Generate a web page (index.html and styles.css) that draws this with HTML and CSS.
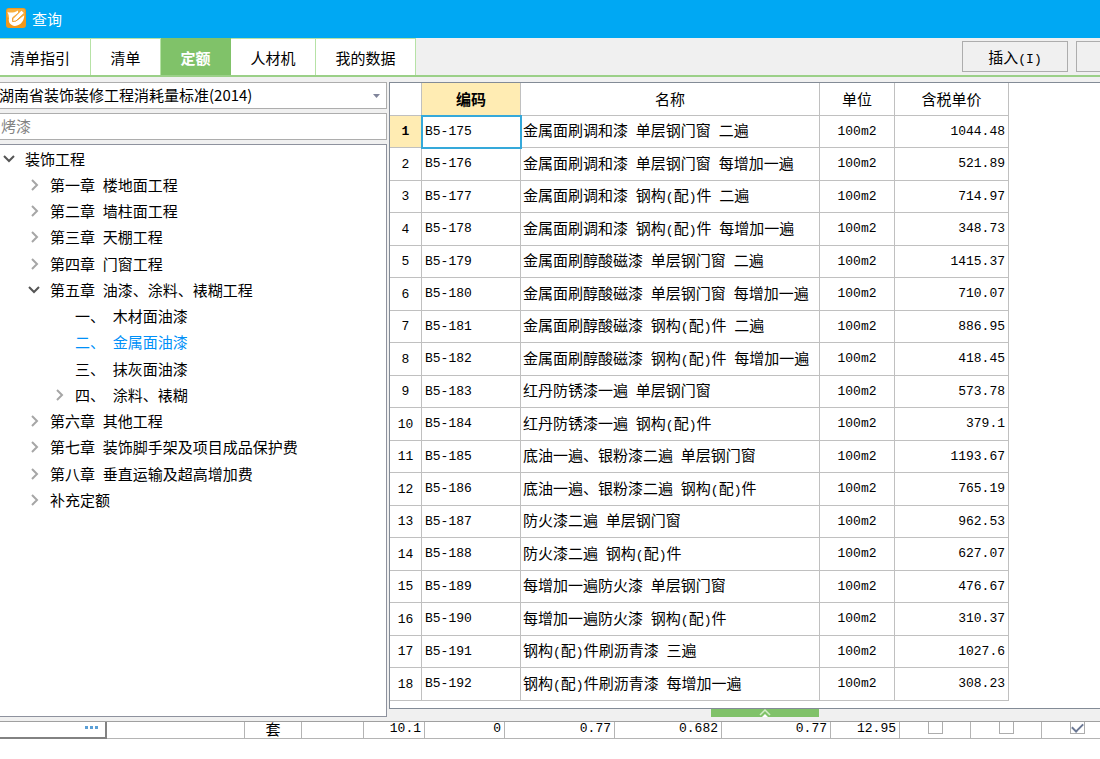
FILE: index.html
```html
<!DOCTYPE html>
<html lang="zh-CN">
<head>
<meta charset="utf-8">
<title>查询</title>
<link rel="stylesheet" href="styles.css">
</head>
<body>
<header class="titlebar">
  <svg class="logo" viewBox="0 0 20 20" aria-hidden="true">
    <rect width="20" height="20" rx="3" fill="#f3981a"/>
    <rect x="1" y="1" width="18" height="9" rx="2" fill="#f8ae3c"/>
    <path d="M1.500 4C4 5 8 5 12 2.500L12 5L8 8C6.500 9 6 10 6 11.500C7 14 10 13.500 12 12L18 7.500C18.500 12 15 17.500 9 18C4 17.500 2 14 3 10C3 8 2.500 6 1.500 4Z" fill="#fff"/>
    <path d="M7 10.500L15.500 2L18.500 5L10 13L6.500 13.500Z" fill="#fff" stroke="#f09a25" stroke-width="1"/>
  </svg>
  <h1>查询</h1>
</header>
<nav class="toolbar">
  <div class="tabs" role="tablist">
    <button class="tab tab-guide" role="tab">清单指引</button>
    <button class="tab tab-short" role="tab">清单</button>
    <button class="tab tab-short active" role="tab" aria-selected="true">定额</button>
    <button class="tab tab-mid" role="tab">人材机</button>
    <button class="tab tab-wide" role="tab">我的数据</button>
  </div>
  <div class="actions">
    <button class="action">插入<span class="mono">(I)</span></button>
    <button class="action" aria-label="替换"></button>
  </div>
</nav>
<main class="workspace">
  <aside class="sidebar">
    <div class="picker">
      <select aria-label="定额标准"><option>湖南省装饰装修工程消耗量标准(2014)</option></select>
      <svg class="caret" viewBox="0 0 7 4" aria-hidden="true"><path d="M0 0H7L3.500 4Z" fill="#80849a"/></svg>
    </div>
    <input class="search" type="text" aria-label="搜索" placeholder="烤漆">
    <ul class="tree">
      <li><button class="toggle" aria-label="折叠"><svg viewBox="0 0 12 12"><path class="open" d="M1 3L6 8L11 3"/></svg></button><span class="cn">装饰工程</span></li>
      <li class="l1"><button class="toggle" aria-label="展开"><svg viewBox="0 0 12 12"><path d="M4 1L9 6L4 11"/></svg></button><span class="cn">第一章</span> <span class="cn">楼地面工程</span></li>
      <li class="l1"><button class="toggle" aria-label="展开"><svg viewBox="0 0 12 12"><path d="M4 1L9 6L4 11"/></svg></button><span class="cn">第二章</span> <span class="cn">墙柱面工程</span></li>
      <li class="l1"><button class="toggle" aria-label="展开"><svg viewBox="0 0 12 12"><path d="M4 1L9 6L4 11"/></svg></button><span class="cn">第三章</span> <span class="cn">天棚工程</span></li>
      <li class="l1"><button class="toggle" aria-label="展开"><svg viewBox="0 0 12 12"><path d="M4 1L9 6L4 11"/></svg></button><span class="cn">第四章</span> <span class="cn">门窗工程</span></li>
      <li class="l1"><button class="toggle" aria-label="折叠"><svg viewBox="0 0 12 12"><path class="open" d="M1 3L6 8L11 3"/></svg></button><span class="cn">第五章</span> <span class="cn">油漆、涂料、裱糊工程</span></li>
      <li class="leaf"><span class="cn">一、</span> <span class="cn">木材面油漆</span></li>
      <li class="leaf current"><span class="cn">二、</span> <span class="cn">金属面油漆</span></li>
      <li class="leaf"><span class="cn">三、</span> <span class="cn">抹灰面油漆</span></li>
      <li class="l2"><button class="toggle" aria-label="展开"><svg viewBox="0 0 12 12"><path d="M4 1L9 6L4 11"/></svg></button><span class="cn">四、</span> <span class="cn">涂料、裱糊</span></li>
      <li class="l1"><button class="toggle" aria-label="展开"><svg viewBox="0 0 12 12"><path d="M4 1L9 6L4 11"/></svg></button><span class="cn">第六章</span> <span class="cn">其他工程</span></li>
      <li class="l1"><button class="toggle" aria-label="展开"><svg viewBox="0 0 12 12"><path d="M4 1L9 6L4 11"/></svg></button><span class="cn">第七章</span> <span class="cn">装饰脚手架及项目成品保护费</span></li>
      <li class="l1"><button class="toggle" aria-label="展开"><svg viewBox="0 0 12 12"><path d="M4 1L9 6L4 11"/></svg></button><span class="cn">第八章</span> <span class="cn">垂直运输及超高增加费</span></li>
      <li class="l1"><button class="toggle" aria-label="展开"><svg viewBox="0 0 12 12"><path d="M4 1L9 6L4 11"/></svg></button><span class="cn">补充定额</span></li>
    </ul>
  </aside>
  <section class="results">
    <div class="results-box">
      <table class="quota">
        <colgroup><col class="c-no"><col class="c-code"><col class="c-name"><col class="c-unit"><col class="c-price"></colgroup>
        <thead><tr><th></th><th class="marked">编码</th><th>名称</th><th>单位</th><th>含税单价</th></tr></thead>
        <tbody>
          <tr><th class="marked">1</th><td class="selected">B5-175</td><td><span class="cn">金属面刷调和漆</span> <span class="cn">单层钢门窗</span> <span class="cn">二遍</span></td><td>100m2</td><td>1044.48</td></tr>
          <tr><th>2</th><td>B5-176</td><td><span class="cn">金属面刷调和漆</span> <span class="cn">单层钢门窗</span> <span class="cn">每增加一遍</span></td><td>100m2</td><td>521.89</td></tr>
          <tr><th>3</th><td>B5-177</td><td><span class="cn">金属面刷调和漆</span> <span class="cn">钢构</span>(<span class="cn">配</span>)<span class="cn">件</span> <span class="cn">二遍</span></td><td>100m2</td><td>714.97</td></tr>
          <tr><th>4</th><td>B5-178</td><td><span class="cn">金属面刷调和漆</span> <span class="cn">钢构</span>(<span class="cn">配</span>)<span class="cn">件</span> <span class="cn">每增加一遍</span></td><td>100m2</td><td>348.73</td></tr>
          <tr><th>5</th><td>B5-179</td><td><span class="cn">金属面刷醇酸磁漆</span> <span class="cn">单层钢门窗</span> <span class="cn">二遍</span></td><td>100m2</td><td>1415.37</td></tr>
          <tr><th>6</th><td>B5-180</td><td><span class="cn">金属面刷醇酸磁漆</span> <span class="cn">单层钢门窗</span> <span class="cn">每增加一遍</span></td><td>100m2</td><td>710.07</td></tr>
          <tr><th>7</th><td>B5-181</td><td><span class="cn">金属面刷醇酸磁漆</span> <span class="cn">钢构</span>(<span class="cn">配</span>)<span class="cn">件</span> <span class="cn">二遍</span></td><td>100m2</td><td>886.95</td></tr>
          <tr><th>8</th><td>B5-182</td><td><span class="cn">金属面刷醇酸磁漆</span> <span class="cn">钢构</span>(<span class="cn">配</span>)<span class="cn">件</span> <span class="cn">每增加一遍</span></td><td>100m2</td><td>418.45</td></tr>
          <tr><th>9</th><td>B5-183</td><td><span class="cn">红丹防锈漆一遍</span> <span class="cn">单层钢门窗</span></td><td>100m2</td><td>573.78</td></tr>
          <tr><th>10</th><td>B5-184</td><td><span class="cn">红丹防锈漆一遍</span> <span class="cn">钢构</span>(<span class="cn">配</span>)<span class="cn">件</span></td><td>100m2</td><td>379.1</td></tr>
          <tr><th>11</th><td>B5-185</td><td><span class="cn">底油一遍、银粉漆二遍</span> <span class="cn">单层钢门窗</span></td><td>100m2</td><td>1193.67</td></tr>
          <tr><th>12</th><td>B5-186</td><td><span class="cn">底油一遍、银粉漆二遍</span> <span class="cn">钢构</span>(<span class="cn">配</span>)<span class="cn">件</span></td><td>100m2</td><td>765.19</td></tr>
          <tr><th>13</th><td>B5-187</td><td><span class="cn">防火漆二遍</span> <span class="cn">单层钢门窗</span></td><td>100m2</td><td>962.53</td></tr>
          <tr><th>14</th><td>B5-188</td><td><span class="cn">防火漆二遍</span> <span class="cn">钢构</span>(<span class="cn">配</span>)<span class="cn">件</span></td><td>100m2</td><td>627.07</td></tr>
          <tr><th>15</th><td>B5-189</td><td><span class="cn">每增加一遍防火漆</span> <span class="cn">单层钢门窗</span></td><td>100m2</td><td>476.67</td></tr>
          <tr><th>16</th><td>B5-190</td><td><span class="cn">每增加一遍防火漆</span> <span class="cn">钢构</span>(<span class="cn">配</span>)<span class="cn">件</span></td><td>100m2</td><td>310.37</td></tr>
          <tr><th>17</th><td>B5-191</td><td><span class="cn">钢构</span>(<span class="cn">配</span>)<span class="cn">件刷沥青漆</span> <span class="cn">三遍</span></td><td>100m2</td><td>1027.6</td></tr>
          <tr><th>18</th><td>B5-192</td><td><span class="cn">钢构</span>(<span class="cn">配</span>)<span class="cn">件刷沥青漆</span> <span class="cn">每增加一遍</span></td><td>100m2</td><td>308.23</td></tr>
        </tbody>
      </table>
    </div>
    <button class="handle" aria-label="收起"><svg viewBox="0 0 12 8"><path d="M1 6L6 1L11 6" fill="none" stroke="#d3ecc8" stroke-width="1.500"/><path d="M3 8L6 5L9 8Z" fill="#fff"/></svg></button>
  </section>
</main>
<div class="behind">
  <table class="detail">
    <colgroup><col class="d-107"><col class="d-138"><col class="d-57"><col class="d-62"><col class="d-61"><col class="d-80"><col class="d-110"><col class="d-107"><col class="d-109"><col class="d-69"><col class="d-71"><col class="d-71"><col class="d-71"></colgroup>
    <tr>
      <td class="editing"><button class="more" aria-label="更多"><svg viewBox="0 0 13 3"><path d="M0 0h3v3H0zM5 0h3v3H5zM10 0h3v3h-3z" fill="#5b9fd6"/></svg></button></td>
      <td></td><td class="center"><span class="cn">套</span></td><td></td><td>10.1</td><td>0</td><td>0.77</td><td>0.682</td><td>0.77</td><td>12.95</td>
      <td class="center"><input type="checkbox" aria-label="选项一"></td>
      <td class="center"><input type="checkbox" aria-label="选项二"></td>
      <td class="center"><input type="checkbox" aria-label="选项三" checked></td>
    </tr>
  </table>
</div>
</body>
</html>
```
FILE: styles.css
```css
* { box-sizing: border-box; }

body {
  margin: 0;
  min-height: 100vh;
  overflow: hidden;
  background: #fff;
  color: #000;
  font: 13px "Liberation Mono", "Noto Sans CJK SC", monospace;
}

button, input, select {
  margin: 0;
  padding: 0;
  border: 0;
  border-radius: 0;
  background: none;
  color: inherit;
  font: 15px "Noto Sans CJK SC", sans-serif;
}

svg { display: block; }
.cn { font-family: "Noto Sans CJK SC", sans-serif; font-size: 15px; }
.mono { font-family: "Liberation Mono", monospace; font-size: 13px; }

.titlebar {
  display: flex;
  align-items: center;
  gap: 6px;
  height: 38px;
  padding: 0 6px 2px;
  background: #00a8f3;
  color: #fff;
}
.titlebar h1 { margin: 0; font: 15px "Noto Sans CJK SC", sans-serif; }
.logo { width: 20px; height: 20px; }

.toolbar {
  display: flex;
  justify-content: space-between;
  height: 39px;
  overflow: hidden;
  background: #f0f0f0;
  border-bottom: 2px solid #9bd088;
}
.tabs { display: flex; }
.tab {
  background: #fff;
  border-top: 1px solid #b6e2a6;
  border-right: 1px solid #b6e2a6;
}
.tab-guide { width: 91px; padding-right: 10px; }
.tab-short { width: 70px; }
.tab-mid { width: 85px; }
.tab-wide { width: 100px; }
.tab.active { background: #80c269; border-color: #80c269; color: #fff; font-weight: bold; }
.actions { display: flex; align-items: center; gap: 8px; margin-right: -82px; }
.action { width: 106px; height: 31px; border: 1px solid #adadad; background: #f0f0f0; }

.workspace {
  display: flex;
  gap: 2px;
  padding-top: 5px;
  padding-bottom: 4px;
  background: #f0f0f0;
  border-bottom: 1px solid #a0a0a0;
}
.sidebar { display: flex; flex-direction: column; gap: 4px; flex: 0 0 387px; }
.picker { position: relative; }
.picker select {
  display: block;
  appearance: none;
  width: 100%;
  height: 27px;
  padding-bottom: 2px;
  text-indent: -1px;
  background: #fff;
  border: 1px solid #adadad;
  border-left: 0;
}
.caret { position: absolute; right: 7px; top: 12px; width: 7px; height: 4px; }
.search { width: 100%; height: 27px; padding: 0 0 2px 1px; background: #fff; border: 1px solid #adadad; border-left: 0; }
.search::placeholder { color: #838383; }

.tree {
  flex: 1;
  margin: 0;
  padding: 1px 0 0;
  list-style: none;
  background: #fff;
  border: 1px solid #8e929e;
  border-width: 1px 1px 1px 0;
}
.tree li { height: 26px; line-height: 26px; white-space: nowrap; }
.tree li:nth-child(4n) { height: 27px; }
.tree li.l1 { padding-left: 25px; }
.tree li.l2 { padding-left: 50px; }
.tree li.leaf { padding-left: 75px; }
.tree li.current { color: #0090f8; }
.toggle { width: 25px; height: 20px; padding: 0 0 5px 3px; vertical-align: middle; }
.toggle svg { width: 12px; height: 12px; }
.toggle path { fill: none; stroke: #a6a6a6; stroke-width: 2; }
.toggle path.open { stroke: #555; }

.results { flex: 1; min-width: 0; }
.results-box { padding-bottom: 7px; background: #fff; border: 1px solid #838b96; border-right: 0; }
.quota { table-layout: fixed; width: 619px; border-collapse: separate; border-spacing: 0; }
.c-no { width: 32px; }
.c-code { width: 99px; }
.c-name { width: 299px; }
.c-unit { width: 75px; }
.c-price { width: 114px; }
.quota th, .quota td {
  padding: 0 3px;
  border: 1px solid #c0c0c0;
  border-width: 0 1px 1px 0;
  font-weight: normal;
  white-space: nowrap;
}
.quota tr { height: 33px; }
.quota tbody tr:nth-child(odd) { height: 32px; }
.quota thead th { font-family: "Noto Sans CJK SC", sans-serif; font-size: 15px; line-height: 22px; }
.quota tbody td { line-height: 22px; }
.quota td:nth-child(3) { padding-left: 2px; }
.quota td:nth-child(4) { text-align: center; }
.quota td:nth-child(5) { text-align: right; }
.quota th.marked { background: #ffecb3; font-weight: bold; }
.quota td.selected { outline: 2px solid #35a9da; outline-offset: -1px; }

.handle { display: block; width: 108px; height: 8px; margin-left: 322px; background: #80c269; }
.handle svg { width: 12px; height: 8px; margin: 0 auto; }

.behind { overflow: hidden; }
.detail { table-layout: fixed; width: 1113px; border-collapse: separate; border-spacing: 0; }
.detail td {
  height: 17px;
  padding: 0 3px;
  border: 1px solid #b4b4b4;
  border-width: 0 1px 1px 0;
  text-align: right;
  vertical-align: top;
  line-height: 14px;
}
.detail td.center { text-align: center; }
.detail td .cn { display: block; }
.detail td.editing { padding-right: 7px; border: 2px solid #828282; border-width: 0 2px 2px 0; }
.more { display: block; width: 13px; height: 10px; margin-left: auto; }
.more svg { width: 13px; height: 3px; }
.detail input {
  display: block;
  appearance: none;
  width: 15px;
  height: 12px;
  margin: 0 auto;
  border: 1px solid #adadad;
  border-top: 0;
}
.detail input:checked::after {
  content: "";
  display: block;
  width: 9px;
  height: 5px;
  margin: 1px auto 0;
  border: 2px solid #6b7894;
  border-width: 0 0 2px 2px;
  transform: rotate(-45deg);
}
.d-107 { width: 107px; }
.d-138 { width: 138px; }
.d-57 { width: 57px; }
.d-62 { width: 62px; }
.d-61 { width: 61px; }
.d-80 { width: 80px; }
.d-110 { width: 110px; }
.d-109 { width: 109px; }
.d-69 { width: 69px; }
.d-71 { width: 71px; }
```
